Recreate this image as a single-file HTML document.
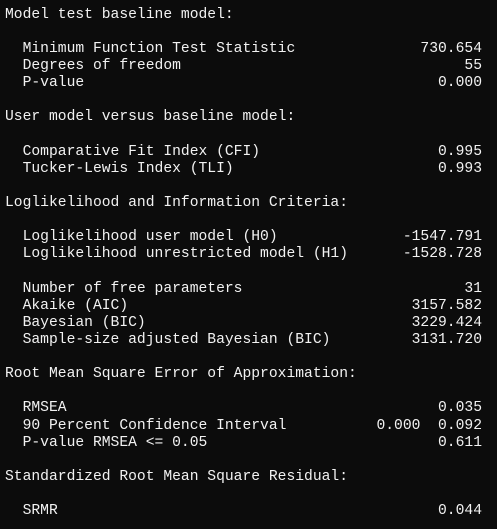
<!DOCTYPE html>
<html><head><style>
html,body{margin:0;padding:0;background:#0c0c0c;width:497px;height:529px;overflow:hidden}
.c{position:absolute;left:5px;top:6.5px;width:477px;font-family:"Liberation Mono",monospace;font-size:14.67px;line-height:17.14px;color:#f2f2f2}
.l{height:17.14px;white-space:pre;display:flex;justify-content:space-between}
</style></head><body><div class="c">
<div class="l">Model test baseline model:</div>
<div class="l"></div>
<div class="l"><span>  Minimum Function Test Statistic</span><span>730.654</span></div>
<div class="l"><span>  Degrees of freedom</span><span>55</span></div>
<div class="l"><span>  P-value</span><span>0.000</span></div>
<div class="l"></div>
<div class="l">User model versus baseline model:</div>
<div class="l"></div>
<div class="l"><span>  Comparative Fit Index (CFI)</span><span>0.995</span></div>
<div class="l"><span>  Tucker-Lewis Index (TLI)</span><span>0.993</span></div>
<div class="l"></div>
<div class="l">Loglikelihood and Information Criteria:</div>
<div class="l"></div>
<div class="l"><span>  Loglikelihood user model (H0)</span><span>-1547.791</span></div>
<div class="l"><span>  Loglikelihood unrestricted model (H1)</span><span>-1528.728</span></div>
<div class="l"></div>
<div class="l"><span>  Number of free parameters</span><span>31</span></div>
<div class="l"><span>  Akaike (AIC)</span><span>3157.582</span></div>
<div class="l"><span>  Bayesian (BIC)</span><span>3229.424</span></div>
<div class="l"><span>  Sample-size adjusted Bayesian (BIC)</span><span>3131.720</span></div>
<div class="l"></div>
<div class="l">Root Mean Square Error of Approximation:</div>
<div class="l"></div>
<div class="l"><span>  RMSEA</span><span>0.035</span></div>
<div class="l"><span>  90 Percent Confidence Interval</span><span>0.000  0.092</span></div>
<div class="l"><span>  P-value RMSEA &lt;= 0.05</span><span>0.611</span></div>
<div class="l"></div>
<div class="l">Standardized Root Mean Square Residual:</div>
<div class="l"></div>
<div class="l"><span>  SRMR</span><span>0.044</span></div>
</div></body></html>
